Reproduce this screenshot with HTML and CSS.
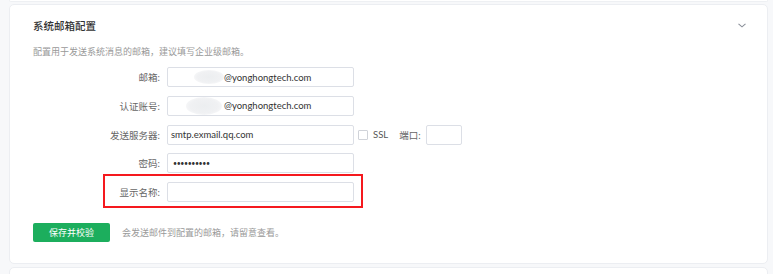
FILE: index.html
```html
<!DOCTYPE html>
<html>
<head>
<meta charset="utf-8">
<link rel="stylesheet" href="styles.css">
</head>
<body>
<div class="prev-card"></div>
<section class="card">
  <header class="card-head">
    <h2 class="title">系统邮箱配置</h2>
    <svg class="chev" width="8" height="5" viewBox="0 0 8 5"><polyline points="0.5,0.8 4,3.8 7.5,0.8" fill="none" stroke="#8a8f99" stroke-width="1.1"/></svg>
  </header>
  <p class="desc">配置用于发送系统消息的邮箱，建议填写企业级邮箱。</p>
  <div class="form">
    <div class="row">
      <label class="lbl">邮箱:</label>
      <div class="field"><span class="blob b1"></span><span class="val mail">@yonghongtech.com</span></div>
    </div>
    <div class="row">
      <label class="lbl">认证账号:</label>
      <div class="field"><span class="blob b2"></span><span class="val mail">@yonghongtech.com</span></div>
    </div>
    <div class="row">
      <label class="lbl">发送服务器:</label>
      <div class="field"><span class="val">smtp.exmail.qq.com</span></div>
      <span class="check"></span><span class="ssl">SSL</span>
      <label class="port-lbl">端口:</label>
      <div class="field port"></div>
    </div>
    <div class="row">
      <label class="lbl">密码:</label>
      <div class="field"><span class="val dots">••••••••••</span></div>
    </div>
    <div class="row marked">
      <label class="lbl">显示名称:</label>
      <div class="field"></div>
      <span class="redbox"></span>
    </div>
  </div>
  <div class="actions">
    <button class="btn">保存并校验</button>
    <span class="hint">会发送邮件到配置的邮箱，请留意查看。</span>
  </div>
</section>
<div class="next-card"></div>
</body>
</html>
```
FILE: styles.css
```css
html, body { margin: 0; padding: 0; }
* { box-sizing: border-box; }
body {
  background: #f7f8fa;
  font-family: "Lato", "Noto Sans CJK SC", sans-serif;
  font-size: 9.5px;
  color: #333;
  width: 773px;
  height: 274px;
  overflow: hidden;
}
.prev-card {
  height: 2px;
  margin: 0 5px 2px 9px;
  border: 1px solid #eef0f3;
  border-top: none;
  background: #fff;
  border-radius: 0 0 4px 4px;
}
.card {
  margin: 0 5px 0 9px;
  background: #fff;
  border: 1px solid #eceef2;
  border-radius: 5px;
  padding: 0 23px 21px 23px;
  height: 260px;
}
.card-head {
  display: flex;
  align-items: center;
  justify-content: space-between;
  height: 41px;
}
.title {
  margin: 0;
  font-size: 10.5px;
  font-weight: 500;
  color: #333;
  line-height: 14px;
}
.chev { margin-right: -2px; margin-top: -1px; }
.desc {
  margin: 0;
  color: #999;
  font-size: 9px;
  line-height: 12px;
}
.form { display: flex; flex-direction: column; gap: 8.75px; margin-top: 9px; }
.row {
  display: flex;
  align-items: center;
  height: 20px;
  position: relative;
}
.lbl {
  width: 127px;
  text-align: right;
  color: #666;
  font-size: 9.5px;
  margin-right: 7px;
}
.field {
  width: 187px;
  height: 20px;
  border: 1px solid #dcdfe6;
  border-radius: 2px;
  position: relative;
  display: flex;
  align-items: center;
  overflow: hidden;
  background: #fff;
}
.val { padding-left: 3px; font-size: 9.5px; color: #333; position: relative; }
.val.mail { padding-left: 56px; }
.dots { font-size: 7px; letter-spacing: -0.4px; padding-left: 5px; }
.blob {
  position: absolute;
  top: 2px;
  height: 14px;
  border-radius: 50%;
  background: radial-gradient(ellipse at center, #eceef0 0%, #f0f1f3 55%, rgba(255,255,255,0) 100%);
}
.b1 { left: 26px; width: 30px; }
.b2 { left: 18px; width: 36px; height: 18px; top: 0; }
.check {
  width: 10px;
  height: 10px;
  border: 1px solid #d0d3d9;
  border-radius: 1px;
  margin-left: 4px;
  background: #fff;
}
.ssl { margin-left: 5px; color: #555; font-size: 9.5px; }
.port-lbl { margin-left: 11px; margin-right: 5px; color: #666; font-size: 9.5px; }
.field.port { width: 36px; }
.redbox {
  position: absolute;
  left: 70px;
  top: -8px;
  width: 260px;
  height: 34px;
  border: 2px solid #f5191e;
}
.actions {
  display: flex;
  align-items: center;
  margin-top: 21px;
}
.btn {
  width: 77px;
  height: 19px;
  border: none;
  border-radius: 2px;
  background: #1cae5d;
  color: #fff;
  font-family: inherit;
  font-size: 9px;
  padding: 0;
  line-height: 19px;
}
.hint { margin-left: 12px; color: #999; font-size: 9px; }
.next-card {
  margin: 3px 5px 0 9px;
  height: 20px;
  background: #fff;
  border: 1px solid #eceef2;
  border-radius: 5px;
}
```
